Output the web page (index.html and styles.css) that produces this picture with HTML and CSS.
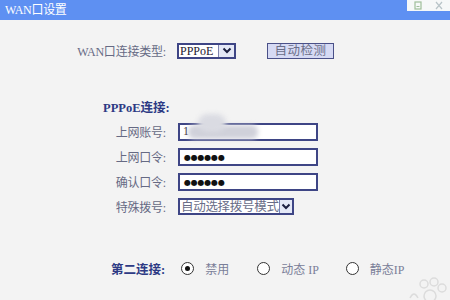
FILE: index.html
```html
<!DOCTYPE html>
<html>
<head>
<meta charset="utf-8">
<link rel="stylesheet" href="styles.css">
</head>
<body>
<div class="titlebar">
  <span class="title">WAN口设置</span>
  <div class="tools">
    <svg width="10" height="9" viewBox="0 0 10 9"><rect x="2" y="1" width="6" height="7" fill="none" stroke="#9fbf9a" stroke-width="1.2"/><line x1="3.5" y1="5.5" x2="6.5" y2="5.5" stroke="#9fbf9a"/></svg>
    <svg width="10" height="9" viewBox="0 0 10 9"><path d="M2 1 L8 8 M8 1 L2 8" stroke="#b8c4c8" stroke-width="1.2"/></svg>
  </div>
</div>
<div class="main">
  <div class="row">
    <span class="label">WAN口连接类型:</span>
    <div class="controls">
      <div class="select small"><span class="val">PPPoE</span><span class="arrow"><svg width="10" height="7" viewBox="0 0 10 7"><path d="M1.5 1.5 L5 5 L8.5 1.5" fill="none" stroke="#1c2040" stroke-width="2"/></svg></span></div>
      <div class="btn">自动检测</div>
    </div>
  </div>
  <div class="heading">PPPoE连接:</div>
  <div class="row tight">
    <span class="label">上网账号:</span>
    <div class="input"><span class="txt">1</span><span class="blur"></span><span class="blur b2"></span></div>
  </div>
  <div class="row">
    <span class="label">上网口令:</span>
    <div class="input"><span class="dots">●●●●●●</span></div>
  </div>
  <div class="row">
    <span class="label">确认口令:</span>
    <div class="input"><span class="dots">●●●●●●</span></div>
  </div>
  <div class="row">
    <span class="label">特殊拨号:</span>
    <div class="select wide"><span class="val cjk">自动选择拨号模式</span><span class="arrow"><svg width="10" height="7" viewBox="0 0 10 7"><path d="M1.5 1.5 L5 5 L8.5 1.5" fill="none" stroke="#1c2040" stroke-width="2"/></svg></span></div>
  </div>
  <div class="radio-row">
    <span class="heading2">第二连接:</span>
    <span class="radio on"></span><span class="rlabel r1">禁用</span>
    <span class="radio"></span><span class="rlabel r2">动态 IP</span>
    <span class="radio"></span><span class="rlabel">静态IP</span>
  </div>
</div>
<svg class="mark" width="40" height="24" viewBox="0 0 40 24"><g fill="none" stroke="#dcdcdc" stroke-width="1.5"><circle cx="16" cy="8" r="4"/><circle cx="26" cy="6" r="4"/><circle cx="34" cy="12" r="4"/><circle cx="22" cy="20" r="6"/><path d="M2 22 Q6 14 10 22"/></g></svg>
</body>
</html>
```
FILE: styles.css
```css
html, body {
  margin: 0;
  padding: 0;
}
body {
  width: 450px;
  height: 300px;
  overflow: hidden;
  background: #f3f3f3;
  font-family: "Liberation Serif", "Noto Sans CJK SC", serif;
  font-size: 12px;
  color: #666a84;
  position: relative;
}
.titlebar {
  height: 20px;
  background: #5e90f2;
  display: flex;
  justify-content: space-between;
  align-items: flex-start;
}
.title {
  color: #fff;
  font-size: 12px;
  line-height: 20px;
  padding-left: 5px;
  letter-spacing: -0.3px;
}
.tools {
  width: 43px;
  height: 11px;
  background: #f6f8f8;
  display: flex;
  align-items: center;
  justify-content: space-around;
}
.main {
  padding-top: 18px;
}
.row {
  display: grid;
  grid-template-columns: 166px auto;
  column-gap: 12px;
  align-items: center;
  height: 25px;
}
.row.tight {
  margin-top: 3px;
}
.label {
  text-align: right;
  font-family: "Liberation Serif", "Noto Sans CJK SC", serif;
  font-size: 12px;
  color: #666a84;
  white-space: nowrap;
}
.label:first-child {
  letter-spacing: -0.2px;
}
.controls {
  display: flex;
  align-items: center;
  gap: 31px;
  margin-left: -1px;
}
.select {
  box-sizing: border-box;
  height: 16px;
  border: 2px solid #3e4585;
  background: #fff;
  display: flex;
  align-items: stretch;
  justify-content: space-between;
}
.select.small {
  width: 59px;
}
.select.wide {
  width: 116px;
  height: 17px;
}
.val {
  font-size: 12px;
  line-height: 12px;
  color: #1e2030;
  padding-left: 1px;
  white-space: nowrap;
}
.val.cjk {
  font-family: "Noto Sans CJK SC", sans-serif;
  font-size: 12.5px;
  color: #6a6e88;
  letter-spacing: -0.3px;
}
.arrow {
  width: 15px;
  background: #e4e8f6;
  border-left: 1px solid #7d82ad;
  display: flex;
  align-items: center;
  justify-content: center;
}
.btn {
  box-sizing: border-box;
  width: 67px;
  height: 16px;
  background: #d6daf4;
  border: 1.5px solid #4a5088;
  font-family: "Noto Sans CJK SC", sans-serif;
  font-size: 12.5px;
  line-height: 12px;
  color: #6a6e88;
  text-align: center;
  letter-spacing: 0.5px;
}
.heading {
  margin-top: 37px;
  height: 16px;
  line-height: 16px;
  padding-left: 103px;
  font-weight: bold;
  color: #2d3a84;
  font-size: 12.5px;
}
.input {
  box-sizing: border-box;
  width: 140px;
  height: 18px;
  border: 2px solid #3e4585;
  background: #fff;
  display: flex;
  align-items: center;
  position: relative;
}
.txt {
  color: #1e2030;
  font-size: 12px;
  padding-left: 3px;
}
.blur {
  position: absolute;
  left: 8px;
  top: 0px;
  width: 70px;
  height: 14px;
  background: #d0d1da;
  border-radius: 6px;
  filter: blur(2.5px);
}
.blur.b2 {
  left: 18px;
  top: -11px;
  width: 28px;
  height: 18px;
  border-radius: 10px;
  background: #dadbe2;
}
.dots {
  color: #111;
  font-family: "DejaVu Sans", sans-serif;
  font-size: 8px;
  letter-spacing: -0.2px;
  padding-left: 4px;
  padding-top: 2px;
}
.radio-row {
  margin-top: 37px;
  height: 25px;
  display: flex;
  align-items: center;
}
.heading2 {
  font-weight: bold;
  color: #2d3a84;
  font-size: 12.5px;
  margin-left: 111px;
  margin-right: 16px;
  white-space: nowrap;
}
.radio {
  box-sizing: border-box;
  width: 13px;
  height: 13px;
  border-radius: 50%;
  border: 1.5px solid #333;
  background: #fff;
  display: flex;
  align-items: center;
  justify-content: center;
}
.radio.on::after {
  content: "";
  width: 5px;
  height: 5px;
  border-radius: 50%;
  background: #111;
}
.rlabel {
  margin-left: 11px;
  color: #7a7e98;
  font-size: 12px;
  font-family: "Liberation Serif", "Noto Sans CJK SC", serif;
}
.rlabel.r1 {
  margin-right: 28px;
}
.rlabel.r2 {
  margin-right: 27px;
}
.mark {
  position: absolute;
  right: 2px;
  bottom: 0;
}
```
